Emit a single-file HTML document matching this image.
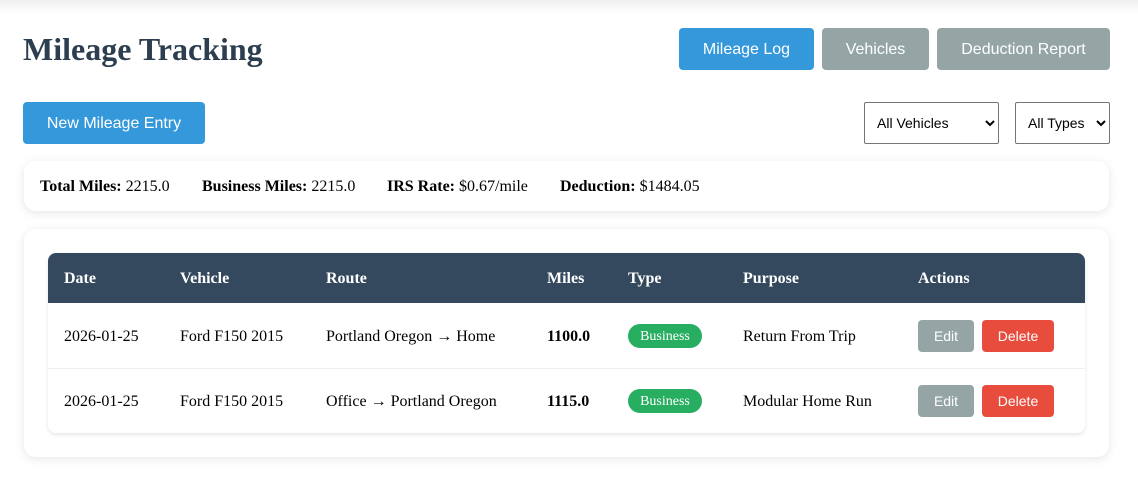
<!DOCTYPE html>
<html lang="en">
<head>
<meta charset="utf-8">
<title>Mileage Tracking</title>
<style>
html,body{margin:0;padding:0;background:#fff;}
body{position:relative;width:1138px;height:494px;overflow:hidden;font-family:"Liberation Serif",serif;font-size:16px;color:#000;}
.abs,.btn,.t,select,.card{position:absolute;}
.topshadow{position:absolute;left:-20px;right:-20px;top:-10px;height:10px;box-shadow:0 4px 12px rgba(0,0,0,.1);background:#fff;}
h1{position:absolute;left:23px;top:31px;margin:0;font-size:32px;line-height:37px;font-weight:bold;color:#2c3e50;white-space:nowrap;}
.btn{display:flex;align-items:center;justify-content:center;font-family:"Liberation Sans",sans-serif;color:#fff;border-radius:4px;white-space:nowrap;box-sizing:border-box;}
.lg{font-size:16px;height:42px;padding-top:1px;}
.sm{font-size:14px;height:32px;}
.blue{background:#3498db;}
.gray{background:#95a5a6;}
.red{background:#e74c3c;}
select{box-sizing:border-box;height:42px;top:102px;padding:8px;font-family:"Liberation Sans",sans-serif;font-size:14px;background:#fff;color:#000;border:1px solid #767676;border-radius:2px;}
.card{background:#fff;border-radius:12px;box-shadow:0 2px 10px rgba(0,0,0,.1);}
.t{white-space:nowrap;line-height:18px;}
.th{font-weight:bold;color:#fff;}
.head{position:absolute;left:48px;top:253px;width:1037px;height:50px;background:#34495e;border-radius:8px 8px 0 0;}
.tbl{position:absolute;left:48px;top:253px;width:1037px;height:180px;border-radius:8px;background:#fff;box-shadow:0 2px 5px rgba(0,0,0,.1);}
.line{position:absolute;left:48px;top:368px;width:1037px;height:1px;background:#ecf0f1;}
.badge{position:absolute;left:628px;width:74px;height:24px;border-radius:12px;background:#27ae60;color:#fff;font-size:14px;line-height:25px;text-align:center;}
b{font-weight:bold;}
</style>
</head>
<body>
<div class="topshadow"></div>
<h1>Mileage Tracking</h1>
<div class="btn lg blue" style="left:679px;top:28px;width:135px;">Mileage Log</div>
<div class="btn lg gray" style="left:822px;top:28px;width:107px;">Vehicles</div>
<div class="btn lg gray" style="left:937px;top:28px;width:173px;">Deduction Report</div>
<div class="btn lg blue" style="left:23px;top:102px;width:182px;">New Mileage Entry</div>
<select style="left:864px;width:135px;"><option>All Vehicles</option></select>
<select style="left:1015px;width:95px;"><option>All Types</option></select>

<div class="card" style="left:24px;top:161px;width:1085px;height:50px;"></div>
<div class="t" style="left:40px;top:178px;"><b>Total Miles:</b> 2215.0</div>
<div class="t" style="left:202px;top:178px;"><b>Business Miles:</b> 2215.0</div>
<div class="t" style="left:387px;top:178px;"><b>IRS Rate:</b> $0.67/mile</div>
<div class="t" style="left:560px;top:178px;"><b>Deduction:</b> $1484.05</div>

<div class="card" style="left:24px;top:229px;width:1085px;height:228px;"></div>
<div class="tbl"></div>
<div class="head"></div>
<div class="t th" style="left:64px;top:270px;">Date</div>
<div class="t th" style="left:180px;top:270px;">Vehicle</div>
<div class="t th" style="left:326px;top:270px;">Route</div>
<div class="t th" style="left:547px;top:270px;">Miles</div>
<div class="t th" style="left:628px;top:270px;">Type</div>
<div class="t th" style="left:743px;top:270px;">Purpose</div>
<div class="t th" style="left:918px;top:270px;">Actions</div>

<div class="t" style="left:64px;top:328px;">2026-01-25</div>
<div class="t" style="left:180px;top:328px;">Ford F150 2015</div>
<div class="t" style="left:326px;top:328px;">Portland Oregon → Home</div>
<div class="t" style="left:547px;top:328px;"><b>1100.0</b></div>
<div class="badge" style="top:324px;">Business</div>
<div class="t" style="left:743px;top:328px;">Return From Trip</div>
<div class="btn sm gray" style="left:918px;top:320px;width:56px;">Edit</div>
<div class="btn sm red" style="left:982px;top:320px;width:72px;">Delete</div>

<div class="line"></div>

<div class="t" style="left:64px;top:393px;">2026-01-25</div>
<div class="t" style="left:180px;top:393px;">Ford F150 2015</div>
<div class="t" style="left:326px;top:393px;">Office → Portland Oregon</div>
<div class="t" style="left:547px;top:393px;"><b>1115.0</b></div>
<div class="badge" style="top:389px;">Business</div>
<div class="t" style="left:743px;top:393px;">Modular Home Run</div>
<div class="btn sm gray" style="left:918px;top:385px;width:56px;">Edit</div>
<div class="btn sm red" style="left:982px;top:385px;width:72px;">Delete</div>
</body>
</html>
